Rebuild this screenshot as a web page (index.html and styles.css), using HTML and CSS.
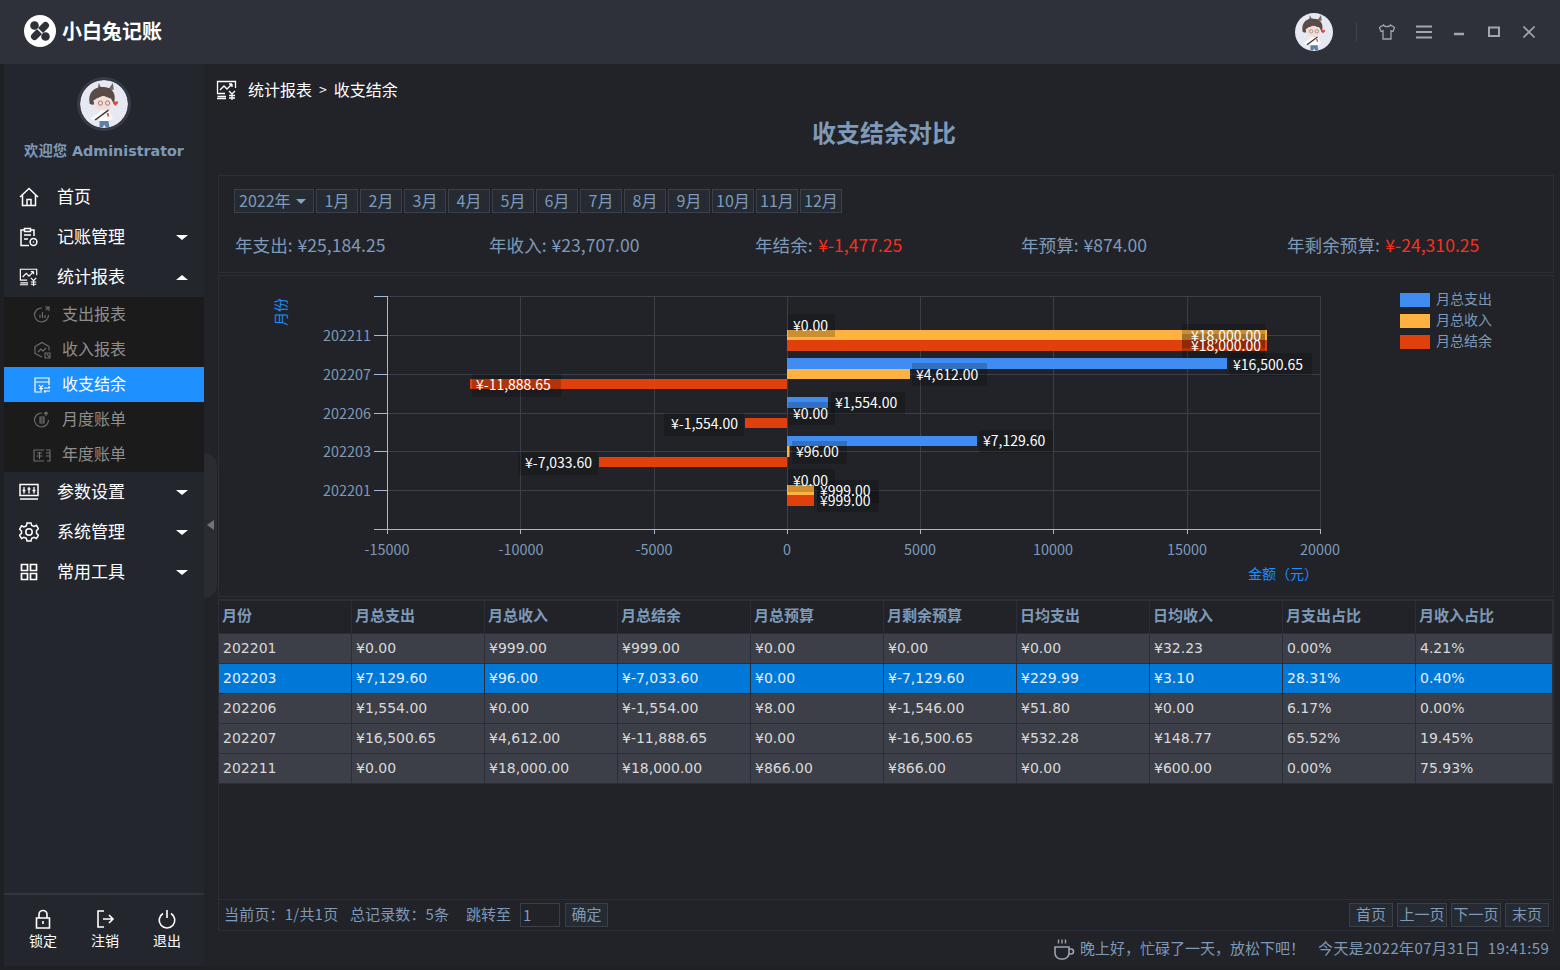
FILE: index.html
```html
<!DOCTYPE html>
<html lang="zh-CN">
<head>
<meta charset="utf-8">
<title>小白兔记账</title>
<link rel="stylesheet" href="styles.css">
</head>
<body>
<svg class="defs" width="0" height="0" aria-hidden="true">
  <symbol id="avatar" viewBox="0 0 54 54">
    <circle cx="27" cy="27" r="27" fill="#e6e9f1"/>
    <path d="M21 3l3 6h9l4-6 1 8H20z" fill="#6d6a68"/>
    <path d="M11 27C8 14 17 7 26 8c9 0 14 6 13 14l-1 5-3-6-8-3-9 3-3 7z" fill="#5a4b47"/>
    <path d="M15 23l10-5 9 3 2 7-4 7h-9l-6-5z" fill="#f3ddd6"/>
    <circle cx="23" cy="26" r="2.400" fill="none" stroke="#8a7a76"/>
    <circle cx="31" cy="26" r="2.400" fill="none" stroke="#8a7a76"/>
    <path d="M23 34l9 0 5 9-3 2-2-1v2H22l-1-4-7 3-2-2 9-6z" fill="#fdfdfd"/>
    <path d="M32 34L17 45" stroke="#3a3330" stroke-width="1.700"/>
    <path d="M22 46h10l1 7h-4l-2-3-1 3h-4z" fill="#5d7fa8"/>
    <path d="M37 25c1-2 3-1 3 0 0-1 2-2 3 0 0 2-3 3-3 4-1-1-3-2-3-4z" fill="#e5443d"/>
    <path d="M30 37h2l1 4h-2z" fill="#e5443d"/>
  </symbol>
</svg>
<header class="titlebar">
  <div class="brand">
    <svg class="logo" viewBox="0 0 32 32">
      <circle cx="16" cy="16" r="16" fill="#fff"/>
      <circle cx="10.500" cy="10.500" r="4.300" fill="#2e313a"/>
      <circle cx="21.500" cy="21.500" r="4.300" fill="#2e313a"/>
      <path d="M21.500 10.500L10.500 21.500" stroke="#2e313a" stroke-width="7" stroke-linecap="round"/>
      <path d="M13.500 13.500l5 5" stroke="#fff" stroke-width="1.600"/>
    </svg>
    <span class="brand-name">小白兔记账</span>
  </div>
  <div class="win-tools">
    <svg class="top-avatar"><use href="#avatar"/></svg>
    <span class="win-sep"></span>
    <svg class="win-ico shirt" viewBox="0 0 18 18"><path d="M5.500 2L1.500 4.500l1.500 4 2-.8V16h8V7.700l2 .8 1.500-4L12.500 2c-.5 2.200-6.500 2.200-7 0z" fill="none" stroke="currentColor" stroke-width="1.300"/></svg>
    <svg class="win-ico menu" viewBox="0 0 18 18"><path d="M1 3.500h16M1 9h16M1 14.500h16" stroke="currentColor" stroke-width="1.800"/></svg>
    <svg class="win-ico mini" viewBox="0 0 12 12"><path d="M1 8h10" stroke="currentColor" stroke-width="2.500"/></svg>
    <svg class="win-ico maxi" viewBox="0 0 12 12"><rect x="1" y="1.500" width="10" height="8.500" fill="none" stroke="currentColor" stroke-width="2"/></svg>
    <svg class="win-ico closer" viewBox="0 0 12 12"><path d="M.5.500l11 11M11.500.500l-11 11" stroke="currentColor" stroke-width="1.600"/></svg>
  </div>
</header>
<div class="main">
  <aside class="sidebar">
    <div class="profile">
      <svg class="avatar"><use href="#avatar"/></svg>
      <div class="welcome">欢迎您 Administrator</div>
    </div>
    <nav class="nav">
      <a class="nav-item">
        <svg class="nav-ico" viewBox="0 0 20 20"><path d="M1 10L10 1.500 19 10M3.500 8v10.500h13V8M8 18.500v-6h4v6" fill="none" stroke="#fff" stroke-width="1.500"/></svg>
        <span>首页</span>
      </a>
      <a class="nav-item">
        <svg class="nav-ico" viewBox="0 0 20 20"><path d="M10 18.500H2V3h3M12 3h3v6M5.500 1.500h6v3h-6zM5 8h7M5 12h4" fill="none" stroke="#fff" stroke-width="1.500"/><circle cx="14.500" cy="15" r="3.400" fill="none" stroke="#fff" stroke-width="1.500"/><circle cx="14.500" cy="15" r=".8" fill="#fff"/></svg>
        <span>记账管理</span><i class="caret"></i>
      </a>
      <a class="nav-item">
        <svg class="nav-ico" viewBox="0 0 22 20"><path d="M9 13.500H1.500v-12h18V8M1.500 16.500H10M1 18.500h9M4 10l4-4 3 3 5-5M16 4h-3M16 4v3M13 11l3 3 3-3M16 14v6M13 15.500h6M13 18h6" fill="none" stroke="#fff" stroke-width="1.300"/></svg>
        <span>统计报表</span><i class="caret up"></i>
      </a>
      <div class="subnav">
        <a class="sub-item">
          <svg class="sub-ico" viewBox="0 0 18 18"><path d="M15.500 9A7 7 0 1 1 9 2M7 12V8.500M9.500 12V6M12 12V9M12 1h4v4M16 1l-3 3" fill="none" stroke="currentColor" stroke-width="1.100"/></svg>
          <span>支出报表</span>
        </a>
        <a class="sub-item">
          <svg class="sub-ico" viewBox="0 0 18 18"><path d="M9 16L2 12.500v-7L9 1.500l7 4v4M5 11l3-3 2 2 3-3M12 12h5v5h-5zM14 13l2 3" fill="none" stroke="currentColor" stroke-width="1.100"/></svg>
          <span>收入报表</span>
        </a>
        <a class="sub-item active">
          <svg class="sub-ico" viewBox="0 0 18 18"><path d="M9 16H2V2h14v7M2 6h14M6 9l2 2.500L10 9M8 11.500V15M6 12.500h4M11 12h6M17 12l-1.500-1.500M11 15h6M11 15l1.500 1.500" fill="none" stroke="currentColor" stroke-width="1.200"/></svg>
          <span>收支结余</span>
        </a>
        <a class="sub-item">
          <svg class="sub-ico" viewBox="0 0 18 18"><path d="M15.500 9A7 7 0 1 1 9 2M7 6h4v6H7zM7 8h4M7 10h4M13 1v4M13 1l-2 2M13 1l2 2" fill="none" stroke="currentColor" stroke-width="1.100"/></svg>
          <span>月度账单</span>
        </a>
        <a class="sub-item">
          <svg class="sub-ico" viewBox="0 0 18 18"><path d="M11 15H1V4h10M13 4h4v11h-3M4 7h5M3.500 10h6M6.500 6v7M13 7h4M13 10h4" fill="none" stroke="currentColor" stroke-width="1.100"/></svg>
          <span>年度账单</span>
        </a>
      </div>
      <a class="nav-item">
        <svg class="nav-ico" viewBox="0 0 20 20"><path d="M1 2.500h18v11H1zM1 17h18" fill="none" stroke="#fff" stroke-width="1.500"/><path d="M5 5v6.500M10 5v6.500M15 5v6.500M3.500 8.500h3M8.500 7h3M13.500 8.500h3" stroke="#fff" stroke-width="1.300"/></svg>
        <span>参数设置</span><i class="caret"></i>
      </a>
      <a class="nav-item">
        <svg class="nav-ico" viewBox="0 0 20 20"><path d="M8 1h4l.7 2.500 2.400 1 2.300-1.200 2 3.400-1.900 1.800v2.900l1.900 1.800-2 3.400-2.300-1.200-2.400 1L12 19H8l-.7-2.600-2.400-1-2.300 1.200-2-3.400 1.900-1.800V9L.6 7.200l2-3.400 2.300 1.200 2.400-1z" fill="none" stroke="#fff" stroke-width="1.500"/><circle cx="10" cy="10" r="3.200" fill="none" stroke="#fff" stroke-width="1.500"/></svg>
        <span>系统管理</span><i class="caret"></i>
      </a>
      <a class="nav-item">
        <svg class="nav-ico" viewBox="0 0 20 20"><path d="M2.500 2.500h6v6h-6zM11.500 2.500h6v6h-6zM2.500 11.500h6v6h-6zM11.500 11.500h6v6h-6z" fill="none" stroke="#fff" stroke-width="1.700"/></svg>
        <span>常用工具</span><i class="caret"></i>
      </a>
    </nav>
    <div class="side-foot">
      <a class="foot-btn">
        <svg class="foot-ico" viewBox="0 0 20 20"><path d="M3.500 9h13v10h-13zM6 9V5.500a4 4 0 0 1 8 0V9M10 12v3" fill="none" stroke="#fff" stroke-width="1.600"/></svg>
        <span>锁定</span>
      </a>
      <a class="foot-btn">
        <svg class="foot-ico" viewBox="0 0 20 20"><path d="M9 2H3v16h6M8 10h10M14 6l4 4-4 4" fill="none" stroke="#fff" stroke-width="1.600"/></svg>
        <span>注销</span>
      </a>
      <a class="foot-btn">
        <svg class="foot-ico" viewBox="0 0 20 20"><path d="M6 4.500a7.800 7.800 0 1 0 8 0M10 1v8" fill="none" stroke="#fff" stroke-width="1.600"/></svg>
        <span>退出</span>
      </a>
    </div>
  </aside>
  <div class="collapse-handle"><i></i></div>
  <main class="content">
    <div class="crumb">
      <svg class="crumb-ico" viewBox="0 0 22 20"><path d="M9 13.500H1.500v-12h18V8M1.500 16.500H10M1 18.500h9M4 10l4-4 3 3 5-5M16 4h-3M16 4v3M13 11l3 3 3-3M16 14v6M13 15.500h6M13 18h6" fill="none" stroke="#fff" stroke-width="1.300"/></svg>
      <span>统计报表</span><span class="crumb-sep">&gt;</span><span>收支结余</span>
    </div>
    <h1 class="page-title">收支结余对比</h1>
    <section class="panel filter">
      <div class="periods">
        <button class="year">2022年<i></i></button>
        <button class="mon">1月</button><button class="mon">2月</button><button class="mon">3月</button><button class="mon">4月</button><button class="mon">5月</button><button class="mon">6月</button><button class="mon">7月</button><button class="mon">8月</button><button class="mon">9月</button><button class="mon">10月</button><button class="mon">11月</button><button class="mon">12月</button>
      </div>
      <div class="stats">
        <div>年支出: &nbsp;¥25,184.25</div>
        <div>年收入: &nbsp;¥23,707.00</div>
        <div>年结余: <b>¥-1,477.25</b></div>
        <div>年预算: &nbsp;¥874.00</div>
        <div>年剩余预算: <b>¥-24,310.25</b></div>
      </div>
    </section>
    <section class="panel chart">
      <svg class="chart-svg" viewBox="219 276 1334 320" width="1334" height="320">
        <g class="grid">
          <path d="M387 296.500H1320.500M387 335.500H1320.500M387 374.500H1320.500M387 413.500H1320.500M387 451.500H1320.500M387 490.500H1320.500"/>
          <path d="M520.500 296V529M654.500 296V529M787.500 296V529M920.500 296V529M1053.500 296V529M1187.500 296V529M1320.500 296V529"/>
        </g>
        <g class="axis">
          <path d="M387.500 296V529.500M374 296.500H387M374 335.500H387M374 374.500H387M374 413.500H387M374 451.500H387M374 490.500H387M374 529.500H1320.500"/>
          <path d="M387.500 529V534M520.500 529V534M654.500 529V534M787.500 529V534M920.500 529V534M1053.500 529V534M1187.500 529V534M1320.500 529V534"/>
        </g>
        <g class="ytext">
          <text x="371" y="334">202211</text><text x="371" y="373">202207</text><text x="371" y="412">202206</text><text x="371" y="450">202203</text><text x="371" y="489">202201</text>
        </g>
        <g class="xtext">
          <text x="387" y="548">-15000</text><text x="521" y="548">-10000</text><text x="654" y="548">-5000</text><text x="787" y="548">0</text><text x="920" y="548">5000</text><text x="1053" y="548">10000</text><text x="1187" y="548">15000</text><text x="1320" y="548">20000</text>
        </g>
        <text class="axis-name" transform="translate(280 312) rotate(-90)">月份</text>
        <text class="axis-name" x="1283" y="573">金额（元）</text>
        <g class="b-blue">
          <rect x="787" y="358" width="440" height="11"/><rect x="787" y="397" width="41" height="11"/><rect x="787" y="436" width="190" height="10"/>
        </g>
        <g class="b-orange">
          <rect x="787" y="330" width="480" height="10"/><rect x="787" y="369" width="123" height="10"/><rect x="787" y="446" width="2.500" height="11"/><rect x="787" y="485" width="27" height="10"/>
        </g>
        <g class="b-red">
          <rect x="787" y="340" width="480" height="11"/><rect x="470" y="379" width="317" height="10"/><rect x="745" y="418" width="42" height="10"/><rect x="599" y="457" width="188" height="10"/><rect x="787" y="495" width="27" height="11"/>
        </g>
        <g class="lab-bg">
          <rect x="788" y="314" width="47" height="23"/><rect x="1182" y="324" width="83" height="24"/><rect x="1182" y="334" width="83" height="24"/><rect x="1229" y="353" width="83" height="23"/><rect x="912" y="363" width="75" height="23"/><rect x="472" y="374" width="89" height="23"/><rect x="831" y="392" width="74" height="23"/><rect x="788" y="402" width="47" height="23"/><rect x="664" y="413" width="80" height="23"/><rect x="979" y="430" width="74" height="23"/><rect x="792" y="441" width="55" height="23"/><rect x="518" y="452" width="80" height="23"/><rect x="788" y="469" width="47" height="23"/><rect x="817" y="480" width="62" height="23"/><rect x="817" y="489" width="62" height="23"/>
        </g>
        <g class="lab">
          <text x="793" y="331">¥0.00</text><text x="1191" y="341">¥18,000.00</text><text x="1191" y="351">¥18,000.00</text><text x="1233" y="370">¥16,500.65</text><text x="916" y="380">¥4,612.00</text><text x="476" y="390">¥-11,888.65</text><text x="835" y="408">¥1,554.00</text><text x="793" y="419">¥0.00</text><text x="671" y="429">¥-1,554.00</text><text x="983" y="446">¥7,129.60</text><text x="796" y="457">¥96.00</text><text x="525" y="468">¥-7,033.60</text><text x="793" y="486">¥0.00</text><text x="820" y="496">¥999.00</text><text x="820" y="506">¥999.00</text>
        </g>
        <g class="legend">
          <rect class="b-blue" x="1400" y="293" width="30" height="14"/><text x="1436" y="304">月总支出</text>
          <rect class="b-orange" x="1400" y="314" width="30" height="14"/><text x="1436" y="325">月总收入</text>
          <rect class="b-red" x="1400" y="335" width="30" height="14"/><text x="1436" y="346">月总结余</text>
        </g>
      </svg>
    </section>
    <section class="panel data">
      <table class="grid-table">
        <colgroup><col class="c"><col class="c"><col class="c"><col class="c"><col class="c"><col class="c"><col class="c"><col class="c"><col class="c"><col></colgroup>
        <thead>
          <tr><th>月份</th><th>月总支出</th><th>月总收入</th><th>月总结余</th><th>月总预算</th><th>月剩余预算</th><th>日均支出</th><th>日均收入</th><th>月支出占比</th><th>月收入占比</th></tr>
        </thead>
        <tbody>
          <tr><td>202201</td><td>¥0.00</td><td>¥999.00</td><td>¥999.00</td><td>¥0.00</td><td>¥0.00</td><td>¥0.00</td><td>¥32.23</td><td>0.00%</td><td>4.21%</td></tr>
          <tr class="selected"><td>202203</td><td>¥7,129.60</td><td>¥96.00</td><td>¥-7,033.60</td><td>¥0.00</td><td>¥-7,129.60</td><td>¥229.99</td><td>¥3.10</td><td>28.31%</td><td>0.40%</td></tr>
          <tr><td>202206</td><td>¥1,554.00</td><td>¥0.00</td><td>¥-1,554.00</td><td>¥8.00</td><td>¥-1,546.00</td><td>¥51.80</td><td>¥0.00</td><td>6.17%</td><td>0.00%</td></tr>
          <tr><td>202207</td><td>¥16,500.65</td><td>¥4,612.00</td><td>¥-11,888.65</td><td>¥0.00</td><td>¥-16,500.65</td><td>¥532.28</td><td>¥148.77</td><td>65.52%</td><td>19.45%</td></tr>
          <tr><td>202211</td><td>¥0.00</td><td>¥18,000.00</td><td>¥18,000.00</td><td>¥866.00</td><td>¥866.00</td><td>¥0.00</td><td>¥600.00</td><td>0.00%</td><td>75.93%</td></tr>
        </tbody>
      </table>
    </section>
    <section class="panel pager">
      <span class="pg-a">当前页：1/共1页</span>
      <span class="pg-b">总记录数：5条</span>
      <span class="pg-c">跳转至</span>
      <span class="pg-input">1</span>
      <button class="pg-btn ok">确定</button>
      <div class="pg-nav">
        <button class="pg-btn w44">首页</button>
        <button class="pg-btn w50">上一页</button>
        <button class="pg-btn w50">下一页</button>
        <button class="pg-btn w44">末页</button>
      </div>
    </section>
    <footer class="status">
      <svg class="cup" viewBox="0 0 22 22"><path d="M2 9h14v6a6 6 0 0 1-6 6H8a6 6 0 0 1-6-6zM16 11h2a2.500 2.500 0 0 1 0 5h-2" fill="none" stroke="#9aa4b0" stroke-width="1.600"/><path d="M5.500 1.500v4M9 1.500v4M12.500 1.500v4" stroke="#9aa4b0" stroke-width="1.400"/></svg>
      <span class="greet">晚上好，忙碌了一天，放松下吧！</span>
      <span class="clock">今天是2022年07月31日&nbsp;&nbsp;19:41:59</span>
    </footer>
  </main>
</div>
</body>
</html>
```
FILE: styles.css
```css
* { box-sizing: border-box; }
html, body { margin: 0; padding: 0; }
body {
  width: 1560px;
  height: 970px;
  overflow: hidden;
  position: relative;
  background: #1e2024;
  font-family: "Noto Sans CJK SC", "Liberation Sans", sans-serif;
  color: #7e9ab8;
}
.defs { position: absolute; }
button { font-family: inherit; padding: 0; margin: 0; }

.titlebar {
  height: 64px;
  background: #2e313a;
  display: flex;
  align-items: center;
  justify-content: space-between;
}
.brand { display: flex; align-items: center; padding-left: 24px; margin-top: -2px; }
.logo { width: 32px; height: 32px; }
.brand-name {
  margin-left: 6px;
  font-size: 20px;
  line-height: 28px;
  font-weight: 700;
  color: #fff;
}
.win-tools { display: flex; align-items: center; color: #a4a6aa; }
.top-avatar { width: 38px; height: 38px; margin-right: 23px; }
.win-sep { width: 1px; height: 20px; background: #40444d; margin-right: 21px; }
.win-ico { display: block; }
.shirt { width: 18px; height: 18px; margin-right: 19px; }
.menu { width: 18px; height: 18px; margin-right: 20px; }
.mini { width: 12px; height: 12px; margin-right: 23px; }
.maxi { width: 12px; height: 12px; margin-right: 23px; }
.closer { width: 12px; height: 12px; margin-right: 25px; }

.main {
  height: 902px;
  display: flex;
  padding-left: 4px;
  position: relative;
}
.sidebar {
  width: 200px;
  flex: none;
  background: #24262e;
  display: flex;
  flex-direction: column;
}
.profile { height: 113px; padding-top: 13px; text-align: center; }
.avatar {
  display: block;
  width: 54px;
  height: 54px;
  margin: 0 auto;
  border-radius: 50%;
  border: 3px solid #343b45;
}
.welcome {
  margin-top: 9px;
  font-family: "DejaVu Sans", "Noto Sans CJK SC", sans-serif;
  font-size: 14.300px;
  line-height: 22px;
  font-weight: 700;
  color: #7e9ab8;
  white-space: nowrap;
}
.nav { flex: 1; }
.nav-item {
  height: 40px;
  display: flex;
  align-items: center;
  padding-left: 15px;
  padding-right: 16px;
  font-size: 17px;
  color: #fff;
}
.nav-item span { margin-top: -3px; }
.nav-ico { width: 20px; height: 20px; margin-right: 18px; flex: none; }
.caret {
  margin-left: auto;
  width: 0;
  height: 0;
  border-left: 6px solid transparent;
  border-right: 6px solid transparent;
  border-top: 5px solid #fff;
}
.caret.up { border-top: 0; border-bottom: 5px solid #fff; }
.subnav { background: #1b1b1c; }
.sub-item {
  height: 35px;
  display: flex;
  align-items: center;
  padding-left: 29px;
  font-size: 16px;
  color: #8f8f8f;
}
.sub-item span { margin-top: -3px; }
.sub-ico { width: 18px; height: 18px; margin-right: 11px; color: #6f6f6f; flex: none; }
.sub-item.active { background: #1e90ff; color: #fff; }
.sub-item.active .sub-ico { color: #fff; }
.side-foot {
  height: 73px;
  border-top: 2px solid #32353d;
  display: flex;
  padding: 14px 0 0 8px;
}
.foot-btn {
  width: 62px;
  flex: none;
  display: flex;
  flex-direction: column;
  align-items: center;
  font-size: 14px;
  line-height: 20px;
  color: #fff;
}
.foot-ico { width: 20px; height: 20px; margin-bottom: 1px; }
.collapse-handle {
  position: absolute;
  left: 204px;
  top: 389px;
  width: 13px;
  height: 145px;
  background: #2a2c31;
  border-radius: 0 14px 14px 0;
}
.collapse-handle i {
  position: absolute;
  left: 3px;
  top: 67px;
  width: 0;
  height: 0;
  border-top: 5px solid transparent;
  border-bottom: 5px solid transparent;
  border-right: 7px solid #6d7480;
}

.content {
  flex: 1;
  background: #212328;
  padding: 0 6px 0 14px;
  display: flex;
  flex-direction: column;
  min-width: 0;
}
.crumb {
  height: 28px;
  margin-top: 12px;
  margin-left: -2px;
  display: flex;
  align-items: center;
  font-size: 16px;
  color: #fff;
}
.crumb span { margin-top: -2px; }
.crumb-ico { width: 22px; height: 20px; margin-right: 10px; margin-top: -1px; }
.crumb-sep { margin: 0 7px; font-size: 14px; }
.page-title {
  margin: 0;
  height: 58px;
  line-height: 56px;
  padding-right: 4px;
  text-align: center;
  font-size: 24px;
  font-weight: 700;
  color: #7e9ab8;
}
.panel { border: 1px solid #2b2e38; }
.filter {
  margin-top: 13px;
  height: 98px;
  padding: 13px 0 0 15px;
}
.periods { display: flex; gap: 2px; }
.year, .mon {
  height: 24px;
  background: #252a33;
  border: 1px solid #3a3f48;
  color: #7e9ab8;
  font-size: 16px;
  line-height: 18px;
  padding-bottom: 2px;
}
.year {
  width: 80px;
  display: flex;
  align-items: center;
  padding-left: 4px;
}
.year i {
  margin-left: 5px;
  margin-top: 3px;
  width: 0;
  height: 0;
  border-left: 5px solid transparent;
  border-right: 5px solid transparent;
  border-top: 5px solid #8aa3c0;
}
.mon { width: 42px; }
.stats {
  margin-top: 19px;
  display: grid;
  grid-template-columns: 254px 266px 266px 266px 1fr;
  padding-left: 1px;
  font-size: 17.600px;
  line-height: 26px;
  color: #7e9ab8;
  word-spacing: -1.500px;
}
.stats b { font-weight: 400; color: #f5301f; margin-left: 3px; }
.chart { margin-top: 2px; height: 322px; }
.chart-svg { display: block; }
.grid path { stroke: #3a3f48; stroke-width: 1; fill: none; shape-rendering: crispEdges; }
.axis path { stroke: #a4bad6; stroke-width: 1; fill: none; shape-rendering: crispEdges; }
.ytext text, .xtext text { font-size: 14.400px; fill: #7e9ab8; }
.ytext text { text-anchor: end; dominant-baseline: central; }
.xtext text { text-anchor: middle; dominant-baseline: central; }
.axis-name { font-size: 14px; fill: #1e90ff; text-anchor: middle; dominant-baseline: central; }
.b-blue, .b-blue rect { fill: #3f8cf2; }
.b-orange, .b-orange rect { fill: #ffb23f; }
.b-red, .b-red rect { fill: #e0400c; }
.lab-bg rect { fill: rgba(0, 0, 0, 0.2); }
.lab text { font-size: 14px; fill: #fff; }
.legend text { font-size: 14px; fill: #7e9ab8; }

.data {
  margin-top: 2px;
  height: 300px;
  border-bottom: 0;
}
.grid-table {
  width: 1335px;
  margin-left: -1px;
  table-layout: fixed;
  border-collapse: collapse;
  font-size: 14px;
}
.grid-table col.c { width: 133px; }
.grid-table th, .grid-table td {
  border: 1px solid #2b2e38;
  padding: 0 0 0 4px;
  text-align: left;
  white-space: nowrap;
  overflow: hidden;
}
.grid-table th {
  height: 33px;
  line-height: 28px;
  vertical-align: top;
  background: #212328;
  color: #7e9ab8;
  font-size: 15px;
  font-weight: 700;
  padding-left: 3px;
}
.grid-table td {
  height: 30px;
  line-height: 28px;
  vertical-align: top;
  background: #3c3f47;
  color: #d9d9d9;
  font-family: "DejaVu Sans", "Noto Sans CJK SC", sans-serif;
}
.grid-table .selected td { background: #0078d7; color: #e6eef8; }

.pager {
  height: 32px;
  display: flex;
  align-items: center;
  padding: 0 4px 0 5px;
  font-size: 15px;
  color: #7e9ab8;
}
.pg-a { width: 126px; white-space: nowrap; margin-top: -3px; letter-spacing: 0.200px; }
.pg-b { width: 116px; white-space: nowrap; margin-top: -3px; letter-spacing: 0.100px; }
.pg-c { width: 54px; white-space: nowrap; margin-top: -3px; }
.pg-input {
  width: 40px;
  height: 24px;
  border: 1px solid #3a3f48;
  line-height: 22px;
  padding-left: 2px;
  margin-right: 5px;
}
.pg-btn {
  height: 24px;
  background: #252a33;
  border: 1px solid #3a3f48;
  color: #7e9ab8;
  font-size: 15px;
  line-height: 17px;
  padding-bottom: 3px;
}
.ok { width: 43px; }
.pg-nav { margin-left: auto; display: flex; gap: 4px; }
.w44 { width: 44px; }
.w50 { width: 50px; }
.status {
  flex: 1;
  display: flex;
  align-items: center;
  font-size: 15px;
  color: #7e9ab8;
  padding-left: 835px;
  padding-bottom: 2px;
  white-space: nowrap;
}
.cup { width: 22px; height: 22px; margin-right: 5px; flex: none; margin-top: 3px; }
.greet { width: 238px; }
.clock { letter-spacing: 0.400px; }
```
